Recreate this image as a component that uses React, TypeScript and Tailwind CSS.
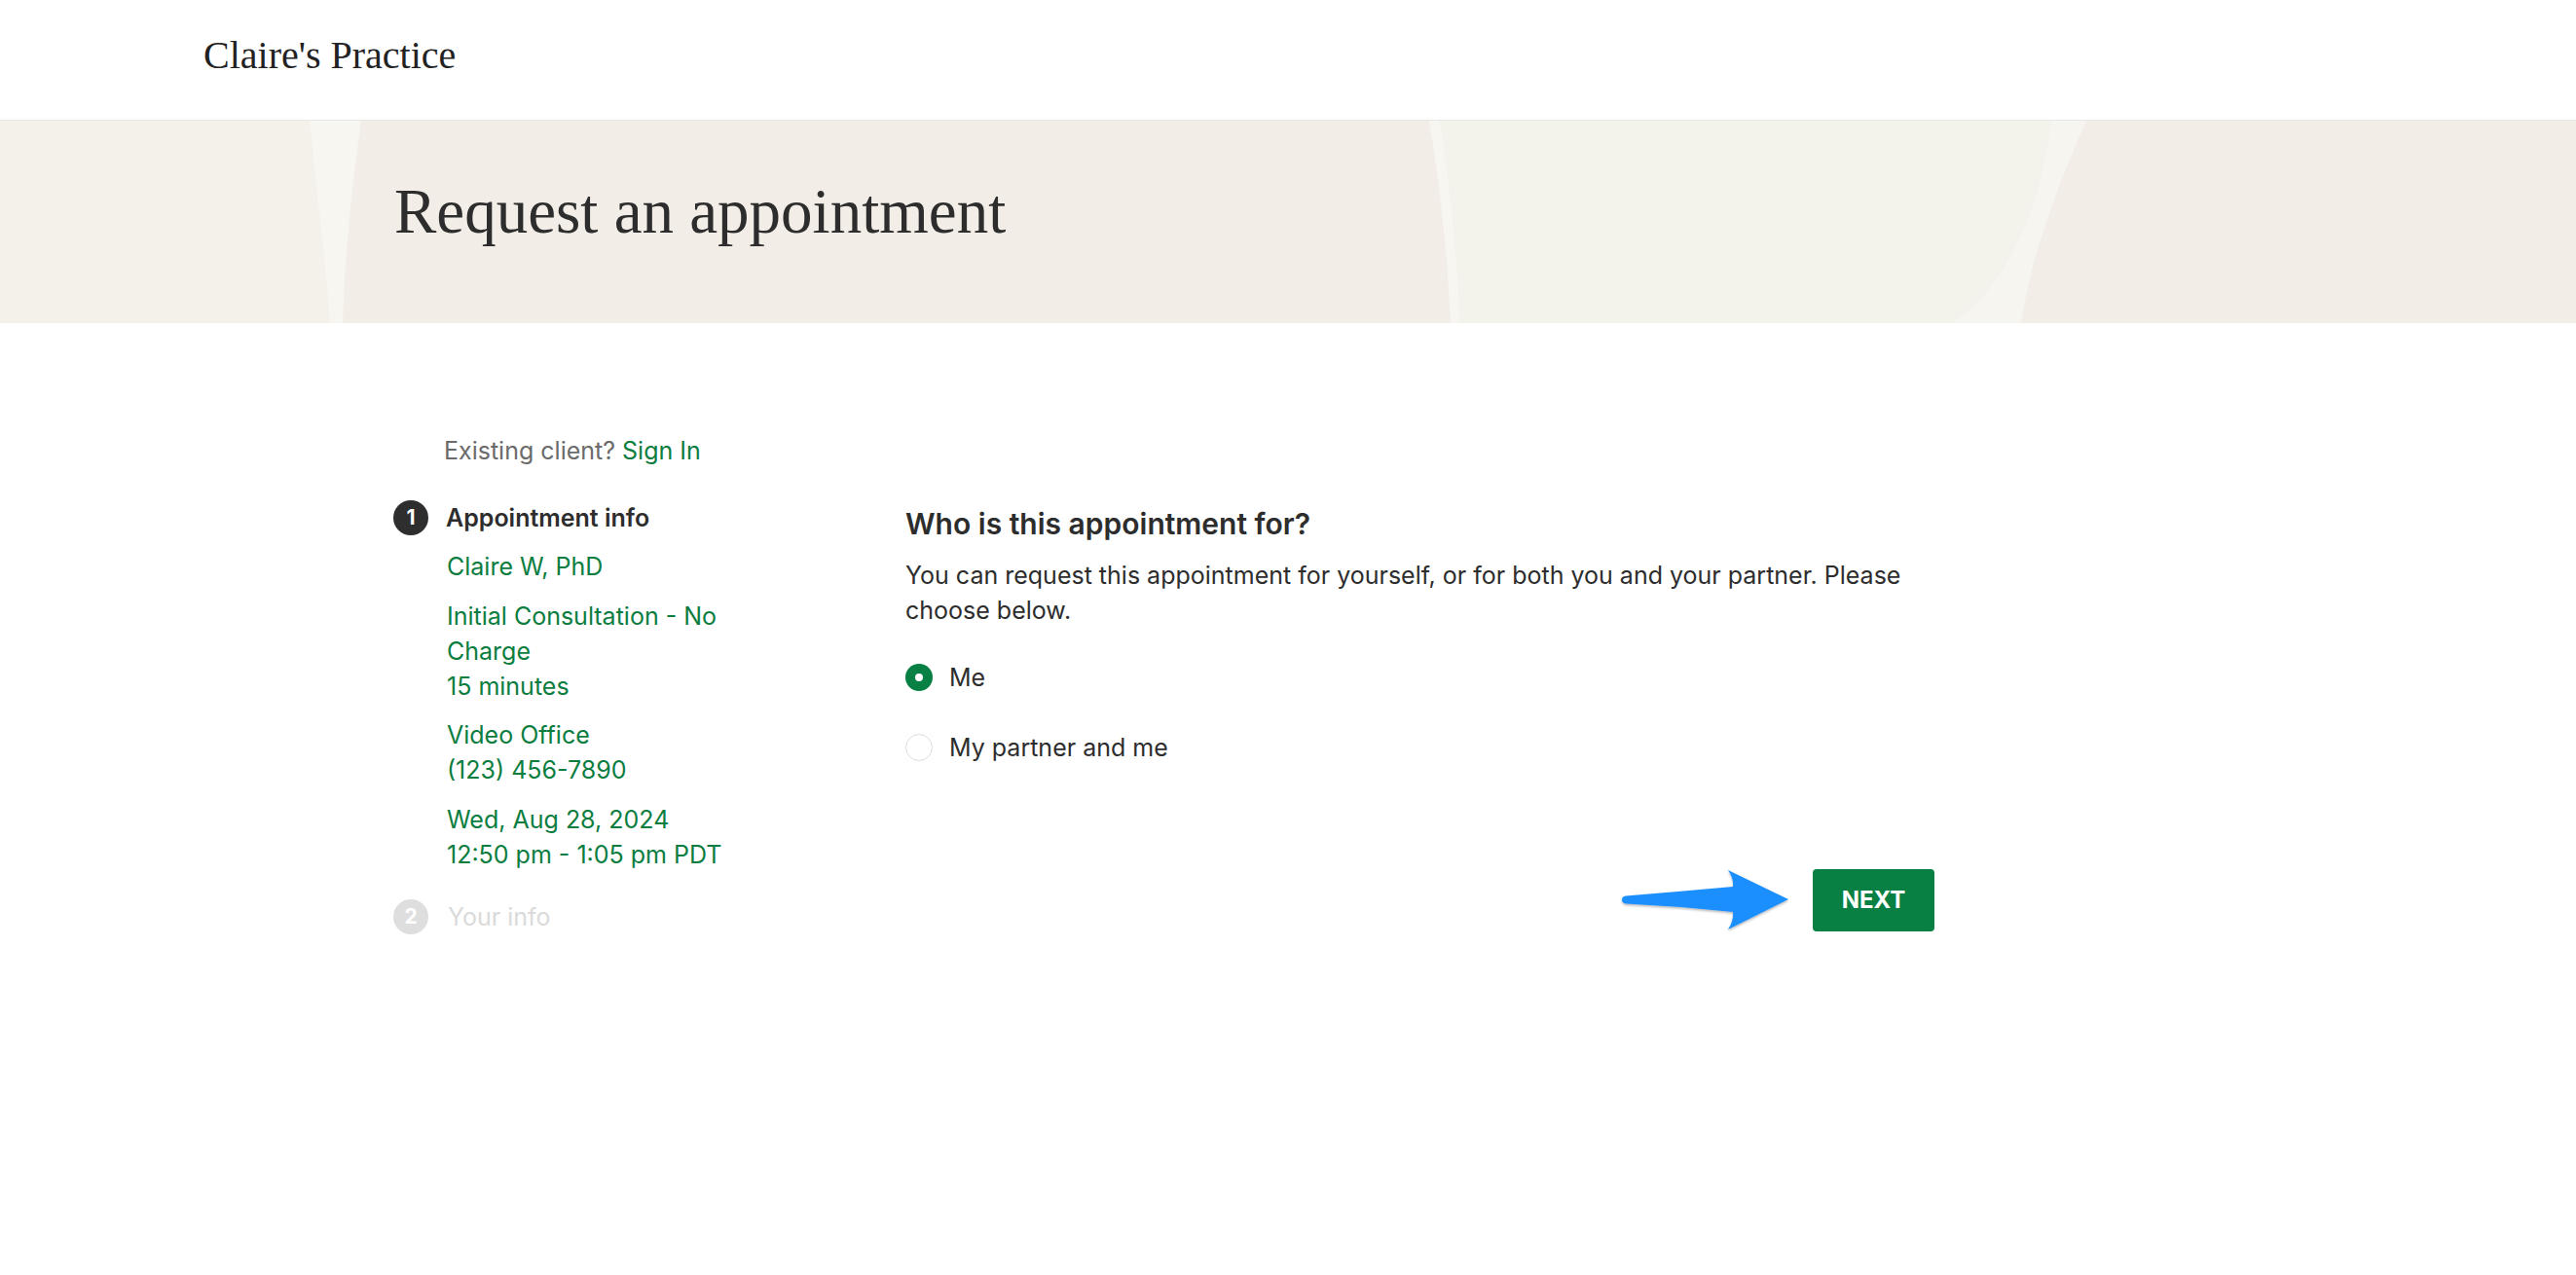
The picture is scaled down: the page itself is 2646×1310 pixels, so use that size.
import { useState } from 'react';

const serif = { fontFamily: '"Liberation Serif", "DejaVu Serif", serif' };

function BannerShapes() {
  return (
    <svg
      className="absolute inset-0 h-full w-full"
      viewBox="0 0 2646 208"
      preserveAspectRatio="none"
      aria-hidden
    >
      <rect width="2646" height="208" fill="#f2eee7" />
      <path d="M0 0H318C325 70 334 140 339 208H0Z" fill="#f3f1ea" />
      <path d="M318 0H371C361 70 354 140 352 208H339C334 140 325 70 318 0Z" fill="#f7f6f1" />
      <path d="M1468 0H1479C1490 70 1497 140 1500 208H1490C1487 140 1480 70 1468 0Z" fill="#f7f6f1" />
      <path d="M1479 0H2107C2096 90 2062 170 2005 208H1500C1497 140 1490 70 1479 0Z" fill="#f3f2eb" />
      <path d="M2107 0H2143C2112 70 2086 140 2076 208H2005C2062 170 2096 90 2107 0Z" fill="#f6f5f0" />
    </svg>
  );
}

function StepDot({ n, active }: { n: number; active: boolean }) {
  return (
    <span
      className={`flex h-9 w-9 shrink-0 items-center justify-center rounded-full text-[21px] font-bold text-white ${
        active ? 'bg-[#2e2e2e]' : 'bg-[#dedede]'
      }`}
    >
      {n}
    </span>
  );
}

function Radio({ checked, label, onClick }: { checked: boolean; label: string; onClick: () => void }) {
  return (
    <button type="button" onClick={onClick} className="flex h-9 items-center gap-[17px] text-left">
      {checked ? (
        <span className="flex h-7 w-7 items-center justify-center rounded-full bg-[#087f43]">
          <span className="h-2 w-2 rounded-full bg-white" />
        </span>
      ) : (
        <span className="h-7 w-7 rounded-full border-[1.5px] border-[#dcdcdc] bg-white" />
      )}
      <span className="text-[25px] leading-9 text-[#2d2d2d]">{label}</span>
    </button>
  );
}

export default function App() {
  const [who, setWho] = useState<'me' | 'partner'>('me');

  return (
    <div
      className="min-h-screen bg-white text-[#2d2d2d]"
      style={{ fontFamily: 'Inter, "Noto Sans", "Liberation Sans", sans-serif' }}
    >
      {/* Practice name */}
      <header className="flex h-[124px] items-center border-b border-[#e8e8e8] pb-[10px] pl-[209px]">
        <span className="text-[40px] leading-none text-[#222]" style={serif}>
          Claire's Practice
        </span>
      </header>

      {/* Banner */}
      <section className="relative flex h-[208px] items-center overflow-hidden pb-[22px] pl-[405px]">
        <BannerShapes />
        <h1 className="relative text-[65px] leading-none text-[#2d2d2d]" style={serif}>
          Request an appointment
        </h1>
      </section>

      {/* Content */}
      <main className="flex items-start pl-[404px] pt-[113px]">
        <aside className="w-[526px] shrink-0 text-[25px] leading-9">
          <p className="pl-[52px] text-[#6b6b6b]">
            Existing client? <a className="text-[#0a7d3f]">Sign In</a>
          </p>

          <div className="mt-[33px] flex items-center gap-[18px]">
            <StepDot n={1} active />
            <span className="font-semibold text-[#2d2d2d]">Appointment info</span>
          </div>

          <div className="w-[390px] pl-[55px] text-[#0a7d3f]">
            <p className="mt-[14px]">Claire W, PhD</p>
            <p className="mt-[15px]">
              Initial Consultation - No Charge
              <br />
              15 minutes
            </p>
            <p className="mt-[14px]">
              Video Office
              <br />
              (123) 456-7890
            </p>
            <p className="mt-[15px]">
              Wed, Aug 28, 2024
              <br />
              12:50 pm - 1:05 pm PDT
            </p>
          </div>

          <div className="mt-[28px] flex items-center gap-[20px]">
            <StepDot n={2} active={false} />
            <span className="text-[#dadada]">Your info</span>
          </div>
        </aside>

        <section className="mt-[75px] w-[1057px]">
          <h2 className="text-[30px] font-semibold leading-[36px] text-[#2d2d2d]">Who is this appointment for?</h2>
          <p className="mt-[17px] text-[25px] leading-9 text-[#2d2d2d]">
            You can request this appointment for yourself, or for both you and your partner. Please choose below.
          </p>

          <div className="mt-[33px] flex flex-col gap-9">
            <Radio checked={who === 'me'} label="Me" onClick={() => setWho('me')} />
            <Radio checked={who === 'partner'} label="My partner and me" onClick={() => setWho('partner')} />
          </div>

          <div className="mt-[107px] flex justify-end">
            <div className="relative">
              {/* pointer arrow annotation */}
              <svg
                className="absolute right-[calc(100%+23px)] top-0 h-[64px] w-[174px]"
                viewBox="0 0 174 64"
                aria-hidden
              >
                <defs>
                  <filter id="arrowShadow" x="-10%" y="-20%" width="120%" height="150%">
                    <feDropShadow dx="0" dy="1.5" stdDeviation="1.2" floodColor="#000" floodOpacity="0.3" />
                  </filter>
                </defs>
                <path
                  d="M172 31L110 1Q116 10 115 18Q60 23 5 27.5Q1 28 1 31.5Q1 35 5 35.5Q60 38 115 44Q116 53 110 62Z"
                  fill="#1e8fff"
                  filter="url(#arrowShadow)"
                />
              </svg>
              <button
                type="button"
                className="flex h-[64px] w-[125px] items-center justify-center rounded-[4px] bg-[#087f43] text-[24px] font-bold text-white"
              >
                NEXT
              </button>
            </div>
          </div>
        </section>
      </main>
    </div>
  );
}
